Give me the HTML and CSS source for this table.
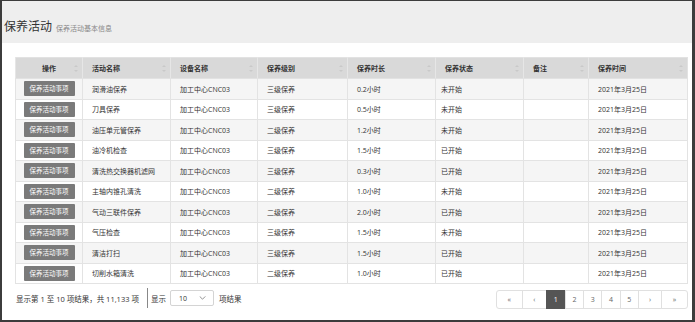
FILE: index.html
```html
<!DOCTYPE html>
<html lang="zh-CN">
<head>
<meta charset="utf-8">
<title>保养活动</title>
<link rel="stylesheet" href="styles.css">
</head>
<body>
<div class="frame">
  <header class="page-head">
    <h1 class="title">保养活动<small class="subtitle">保养活动基本信息</small></h1>
  </header>
  <main class="panel">
    <table class="grid">
      <colgroup>
        <col class="c1"><col class="c2"><col class="c3"><col class="c4"><col class="c5"><col class="c6"><col class="c7"><col class="c8">
      </colgroup>
      <thead>
        <tr>
          <th class="center">操作<i class="sort"></i></th>
          <th>活动名称<i class="sort"></i></th>
          <th>设备名称<i class="sort"></i></th>
          <th class="pl">保养级别<i class="sort"></i></th>
          <th>保养时长<i class="sort"></i></th>
          <th class="st">保养状态<i class="sort"></i></th>
          <th>备注<i class="sort"></i></th>
          <th>保养时间<i class="sort"></i></th>
        </tr>
      </thead>
      <tbody>
        <tr><td class="center"><span class="btn">保养活动事项</span></td><td>润滑油保养</td><td>加工中心CNC03</td><td class="pl">三级保养</td><td>0.2小时</td><td class="st">未开始</td><td></td><td>2021年3月25日</td></tr>
        <tr><td class="center"><span class="btn">保养活动事项</span></td><td>刀具保养</td><td>加工中心CNC03</td><td class="pl">三级保养</td><td>0.5小时</td><td class="st">未开始</td><td></td><td>2021年3月25日</td></tr>
        <tr><td class="center"><span class="btn">保养活动事项</span></td><td>油压单元管保养</td><td>加工中心CNC03</td><td class="pl">二级保养</td><td>1.2小时</td><td class="st">未开始</td><td></td><td>2021年3月25日</td></tr>
        <tr><td class="center"><span class="btn">保养活动事项</span></td><td>油冷机检查</td><td>加工中心CNC03</td><td class="pl">三级保养</td><td>1.5小时</td><td class="st">已开始</td><td></td><td>2021年3月25日</td></tr>
        <tr><td class="center"><span class="btn">保养活动事项</span></td><td>清洗热交换器机滤网</td><td>加工中心CNC03</td><td class="pl">三级保养</td><td>0.3小时</td><td class="st">已开始</td><td></td><td>2021年3月25日</td></tr>
        <tr><td class="center"><span class="btn">保养活动事项</span></td><td>主轴内锥孔清洗</td><td>加工中心CNC03</td><td class="pl">二级保养</td><td>1.0小时</td><td class="st">未开始</td><td></td><td>2021年3月25日</td></tr>
        <tr><td class="center"><span class="btn">保养活动事项</span></td><td>气动三联件保养</td><td>加工中心CNC03</td><td class="pl">二级保养</td><td>2.0小时</td><td class="st">已开始</td><td></td><td>2021年3月25日</td></tr>
        <tr><td class="center"><span class="btn">保养活动事项</span></td><td>气压检查</td><td>加工中心CNC03</td><td class="pl">三级保养</td><td>1.5小时</td><td class="st">未开始</td><td></td><td>2021年3月25日</td></tr>
        <tr><td class="center"><span class="btn">保养活动事项</span></td><td>清洁打扫</td><td>加工中心CNC03</td><td class="pl">三级保养</td><td>1.5小时</td><td class="st">已开始</td><td></td><td>2021年3月25日</td></tr>
        <tr><td class="center"><span class="btn">保养活动事项</span></td><td>切削水箱清洗</td><td>加工中心CNC03</td><td class="pl">二级保养</td><td>1.0小时</td><td class="st">已开始</td><td></td><td>2021年3月25日</td></tr>
      </tbody>
    </table>
    <div class="foot">
      <div class="info">
        <span>显示第 1 至 10 项结果，共 11,133 项</span>
        <span class="sep"></span>
        <span>显示</span>
        <span class="select">10<svg class="chev" viewBox="0 0 8 5" width="7" height="4"><path d="M0.5 0.5 L4 4 L7.5 0.5" fill="none" stroke="#777" stroke-width="1"/></svg></span>
        <span>项结果</span>
      </div>
      <nav class="pager">
        <span class="pg first">«</span>
        <span class="pg prev">‹</span>
        <span class="pg active">1</span>
        <span class="pg">2</span>
        <span class="pg">3</span>
        <span class="pg">4</span>
        <span class="pg">5</span>
        <span class="pg next">›</span>
        <span class="pg last">»</span>
      </nav>
    </div>
  </main>
</div>
</body>
</html>
```
FILE: styles.css
```css
* { box-sizing: border-box; }
html, body { margin: 0; padding: 0; background: #fff; }
body { font-family: "Open Sans", "Noto Sans CJK SC", sans-serif; color: #333; }

.frame {
  width: 695px;
  height: 322px;
  border-style: solid;
  border-color: #3c3c3c;
  border-width: 1px 3px 2px 2px;
  background: #fff;
  display: flex;
  flex-direction: column;
  overflow: hidden;
}

.page-head {
  height: 42px;
  background: #eeeeee;
  display: flex;
  align-items: flex-end;
  padding: 0 0 9px 2px;
  flex: none;
}
.title {
  margin: 0;
  font-size: 12px;
  line-height: 12px;
  font-weight: normal;
  color: #333;
  font-family: "Noto Sans CJK SC", sans-serif;
}
.subtitle {
  font-size: 7px;
  color: #888;
  margin-left: 4px;
}

.panel {
  flex: 1;
  padding: 14px 0 0 13px;
}

.grid {
  width: 672px;
  border-collapse: collapse;
  table-layout: fixed;
  font-size: 7px;
  border: 1px solid #e2e2e2;
}
.c1 { width: 67px; }
.c2 { width: 88px; }
.c3 { width: 87px; }
.c4 { width: 90px; }
.c5 { width: 88px; }
.c6 { width: 88px; }
.c7 { width: 65px; }
.c8 { width: 99px; }

.grid th {
  height: 21px;
  background: #d9d9d9;
  text-align: left;
  font-weight: bold;
  color: #333;
  padding: 0 9px;
  position: relative;
  border-left: 1px solid #e6e6e6;
  border-bottom: 1px solid #e2e2e2;
}
.grid td {
  height: 20.5px;
  padding: 0 9px;
  border: 1px solid #e3e3e3;
  color: #333;
  white-space: nowrap;
}
.grid th.center, .grid td.center { text-align: center; padding: 0; }
.grid th.st { padding-left: 9px; }
.grid td.st { padding-left: 5px; }
.grid tbody tr:nth-child(odd) td { background: #f5f5f5; }
.grid tbody tr:nth-child(even) td { background: #fff; }

.sort {
  position: absolute;
  right: 4px;
  top: 7px;
  width: 4px;
  height: 7px;
}
.sort::before, .sort::after {
  content: "";
  position: absolute;
  left: 0;
  border-left: 2px solid transparent;
  border-right: 2px solid transparent;
}
.sort::before { top: 0; border-bottom: 2.5px solid #c9c9c9; }
.sort::after { bottom: 0; border-top: 2.5px solid #c9c9c9; }

.btn {
  display: inline-block;
  width: 51px;
  height: 15px;
  line-height: 15px;
  background: #7a7a7a;
  color: #fff;
  font-size: 6.5px;
  text-align: center;
  border-radius: 1px;
  vertical-align: middle;
}

.foot {
  display: flex;
  align-items: flex-start;
  justify-content: space-between;
  margin-top: 4px;
  width: 673px;
}
.info {
  display: flex;
  align-items: center;
  height: 20px;
  gap: 3px;
  font-size: 7.5px;
  color: #333;
  padding-left: 1px;
}
.sep {
  width: 1px;
  height: 20px;
  background: #888;
  margin: 0 0 0 5px;
}
.select {
  display: inline-flex;
  align-items: center;
  justify-content: space-between;
  width: 44px;
  height: 16px;
  border: 1px solid #d4d4d4;
  border-radius: 2px;
  padding: 0 7px 0 8px;
  margin: 0 2px 0 1px;
  font-size: 7px;
  background: #fff;
}
.chev { display: block; }

.pager {
  display: flex;
  height: 19px;
  margin-top: 2px;
}
.pg {
  width: 19.3px;
  height: 19px;
  display: flex;
  align-items: center;
  justify-content: center;
  border: 1px solid #e0e0e0;
  margin-left: -1px;
  font-size: 7px;
  color: #666;
  background: #fff;
}
.pg.first { width: 27px; border-radius: 3px 0 0 3px; margin-left: 0; }
.pg.prev { width: 25px; }
.pg.active { width: 20px; background: #555; border-color: #555; color: #fff; }
.pg.next { width: 24px; }
.pg.last { width: 27px; border-radius: 0 3px 3px 0; }
```
